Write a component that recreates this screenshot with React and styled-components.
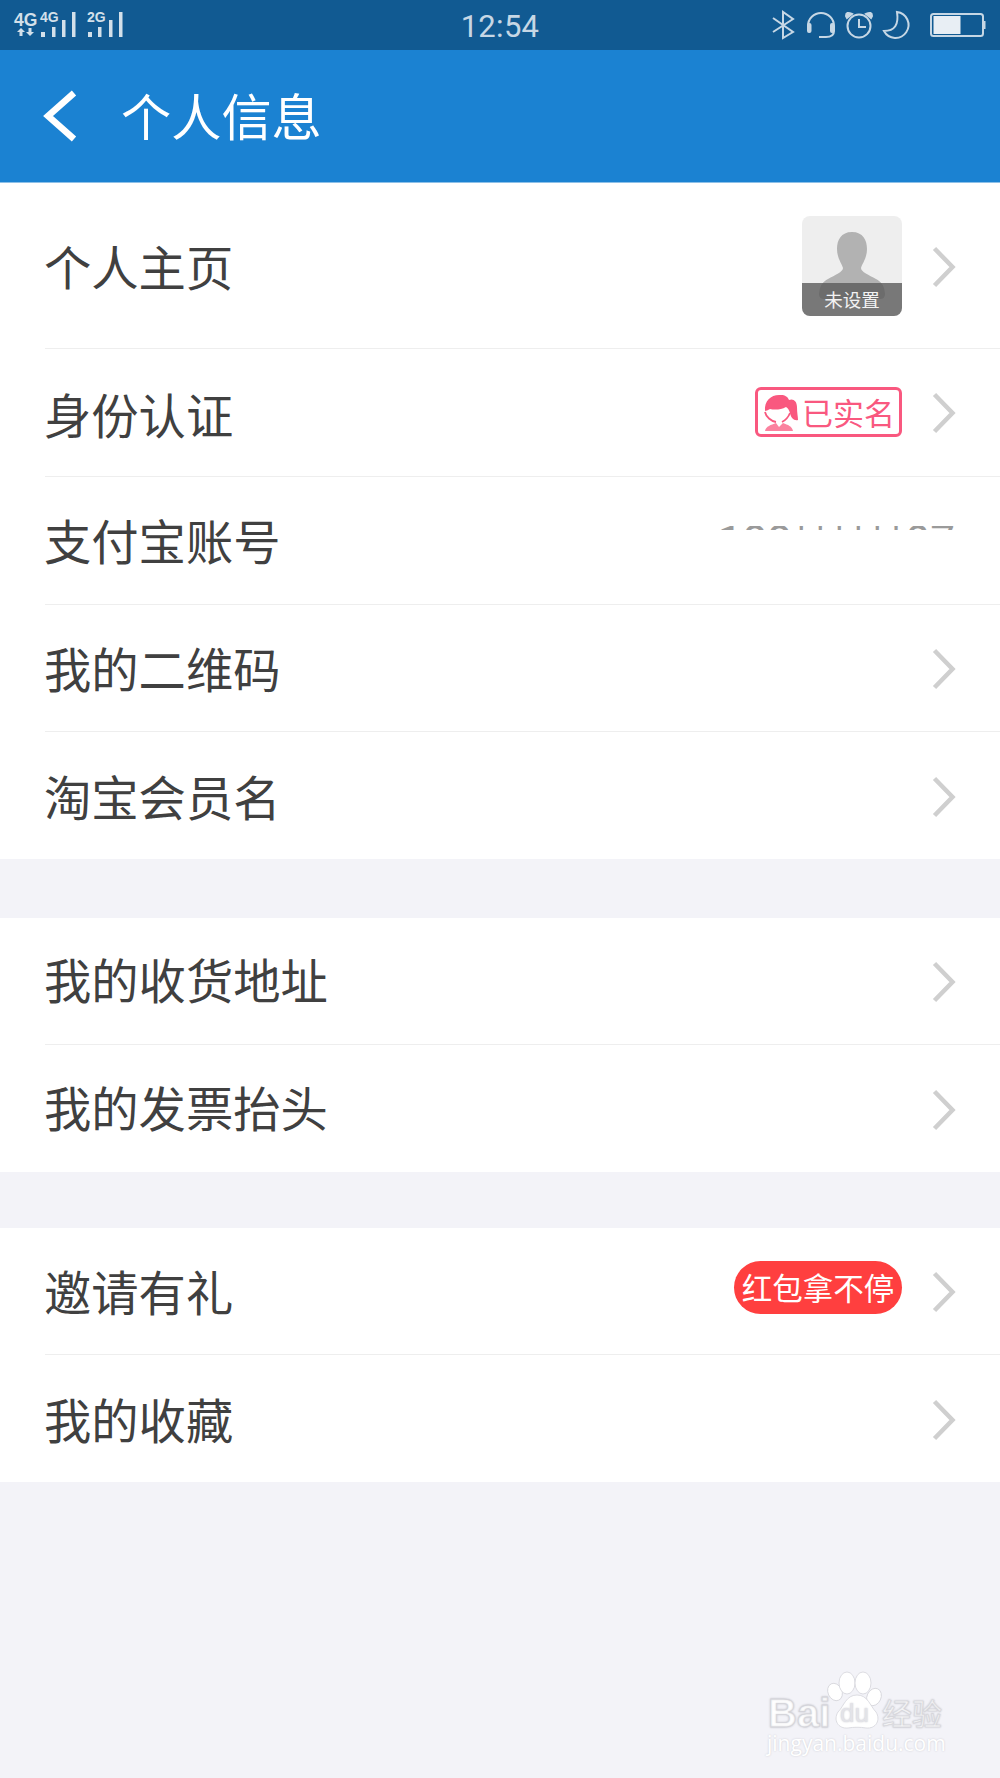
import React from "react";
import styled, { createGlobalStyle } from "styled-components";

const Global = createGlobalStyle`
  html, body { margin: 0; padding: 0; background: #f3f3f8; }
  body { font-family: "Noto Sans CJK SC", "Liberation Sans", sans-serif; }
`;

const Page = styled.div`
  position: relative;
  width: 1000px;
  height: 1778px;
  overflow: hidden;
  background: #f3f3f8;
`;

const StatusBar = styled.div`
  height: 50px;
  background: #115a92;
  display: flex;
  align-items: center;
  justify-content: space-between;
  color: #c6d7e5;
`;

const StatusSide = styled.div`
  width: 300px;
  height: 50px;
  display: flex;
  justify-content: ${(p) => (p.$end ? "flex-end" : "flex-start")};
`;

const Clock = styled.div`
  font-family: Roboto, "Liberation Sans", sans-serif;
  font-size: 31px;
  line-height: 50px;
  letter-spacing: 0.3px;
  padding-top: 3px;
`;

const Header = styled.header`
  height: 133px;
  box-sizing: border-box;
  padding-left: 39px;
  background: #1b82d2;
  border-bottom: 1px solid #8dc0e8;
  display: flex;
  align-items: center;
  gap: 42px;
`;

const Title = styled.h1`
  margin: 0 0 4px;
  font-size: 50.2px;
  font-weight: 400;
  line-height: 60px;
  color: #fff;
`;

const Group = styled.section`
  background: #fff;
  margin-bottom: ${(p) => p.$gap}px;
`;

const Row = styled.div`
  height: ${(p) => p.$h || 126.75}px;
  margin-left: 45px;
  padding-right: 44px;
  display: flex;
  align-items: center;
  justify-content: space-between;
  border-bottom: 1px solid #eeeeee;
  &:last-child { border-bottom: 0; }
`;

const Label = styled.span`
  font-size: 47.3px;
  font-weight: 400;
  line-height: 60px;
  color: #404040;
  margin-left: -1px;
  padding-top: ${(p) => p.$down || 0}px;
  padding-bottom: ${(p) => p.$up || 0}px;
`;

const Right = styled.div`
  display: flex;
  align-items: center;
  gap: 30px;
`;

const Chevron = styled.svg`
  width: 24px;
  height: 42px;
  display: block;
  margin-top: 2px;
  fill: none;
  stroke: #cfcfcf;
  stroke-width: 4.5;
`;

const Avatar = styled.div`
  position: relative;
  width: 100px;
  height: 100px;
  border-radius: 8px;
  overflow: hidden;
  background: #eeeeee;
`;

const AvatarBand = styled.div`
  position: absolute;
  left: 0;
  right: 0;
  bottom: 0;
  height: 33px;
  background: rgba(90, 90, 90, 0.8);
  color: #f2f2f2;
  font-size: 18.5px;
  line-height: 33px;
  text-align: center;
`;

const RealName = styled.div`
  width: 147px;
  height: 50px;
  box-sizing: border-box;
  border: 3px solid #f9587f;
  border-radius: 6px;
  padding-left: 5px;
  display: flex;
  align-items: center;
  gap: 3px;
  color: #f9587f;
  font-size: 31px;
  font-weight: 400;
  line-height: 44px;
`;

const RedPill = styled.div`
  width: 168px;
  height: 53px;
  margin-bottom: 6px;
  border-radius: 27px;
  background: #ff3f3f;
  color: #fff;
  font-size: 30.5px;
  line-height: 52px;
  text-align: center;
`;

const ClippedValue = styled.div`
  align-self: flex-start;
  margin-top: 49px;
  margin-right: 1px;
  height: 4px;
  overflow: hidden;
  font-family: Roboto, "Liberation Sans", sans-serif;
  font-size: 44px;
  line-height: 60px;
  color: #9a9a9a;
  white-space: nowrap;
  & > span { display: block; margin-top: -14px; }
`;

const Watermark = styled.div`
  position: absolute;
  left: 766px;
  top: 1668px;
  width: 190px;
  height: 96px;
  color: #fff;
  text-shadow: 0 0 2px #c9c9cf;
`;

const WmLogo = styled.svg`
  position: absolute;
  left: 0;
  top: 0;
  width: 190px;
  height: 72px;
`;

const WmUrl = styled.div`
  position: absolute;
  left: 1px;
  top: 65px;
  font-family: "Open Sans", "Liberation Sans", sans-serif;
  font-size: 21px;
  line-height: 20px;
  white-space: nowrap;
`;

const Arrow = () => (
  <Chevron viewBox="0 0 24 42">
    <path d="M2.500 2.500 L20.500 21 L2.500 39.500" />
  </Chevron>
);

const rows1 = ["身份认证", "支付宝账号", "我的二维码", "淘宝会员名"];

const SignalIcon = () => (
  <svg width="130" height="50" viewBox="0 0 130 50" fill="#d3e0ea" style={{ display: "block" }}>
    <text x="14" y="26" fontFamily="Liberation Sans, sans-serif" fontWeight="700" fontSize="17.5">4G</text>
    <text x="40" y="22" fontFamily="Liberation Sans, sans-serif" fontWeight="700" fontSize="14">4G</text>
    <text x="87" y="22" fontFamily="Liberation Sans, sans-serif" fontWeight="700" fontSize="14">2G</text>
    <path d="M21 28l-4 4h2.500v4h3v-4h2.500zM30 36l4-4h-2.500v-4h-3v4h-2.500z" />
    <rect x="41" y="32" width="4" height="5" />
    <rect x="52" y="27" width="3.500" height="10" />
    <rect x="62" y="20" width="3.500" height="17" />
    <rect x="72" y="12" width="3.500" height="25" />
    <rect x="88" y="32" width="4" height="5" />
    <rect x="98" y="27" width="3.500" height="10" />
    <rect x="109" y="20" width="3.500" height="17" />
    <rect x="119" y="12" width="3.500" height="25" />
  </svg>
);

const StatusIcons = () => (
  <svg width="300" height="50" viewBox="700 0 300 50" fill="none" stroke="#c6d7e5" strokeWidth="2" style={{ display: "block" }}>
    <path d="M773 18 L793 32 L783 38 V12 L793 19 L773 32" />
    <path d="M808 31 V26 A13 13 0 0 1 834 26 V31" />
    <rect x="808" y="24" width="2.500" height="8" rx="1" fill="#c6d7e5" />
    <rect x="831" y="24" width="2.500" height="8" rx="1" fill="#c6d7e5" />
    <path d="M834 31 Q834 37 826 37 H819" />
    <circle cx="859" cy="26" r="11.500" />
    <path d="M859 19 V27 H866" />
    <path d="M847 18 L852 14 Q846 11 846 16z M871 18 L866 14 Q872 11 872 16z" fill="#c6d7e5" />
    <path d="M897 12 A13 13 0 1 1 884 31 Q900 31 897 12 Z" />
    <rect x="931" y="14" width="52" height="22" rx="2.500" />
    <rect x="933.500" y="16" width="27" height="18" fill="#e8eef4" stroke="none" />
    <rect x="982.500" y="21" width="3" height="8" fill="#c6d7e5" stroke="none" />
  </svg>
);

const Silhouette = () => (
  <svg width="100" height="100" viewBox="0 0 100 100" style={{ display: "block" }}>
    <path fill="#b2b2b2" d="M50 16 C61 16 65 24 65 33 C65 42 60 48 59 52 C59 56 67 59 74 63 C79 66 82 68 83 78 Q83 83 78 83 H22 Q17 83 17 78 C18 68 21 66 26 63 C33 59 41 56 41 52 C40 48 35 42 35 33 C35 24 39 16 50 16 Z" />
  </svg>
);

const GirlIcon = () => (
  <svg width="36" height="40" viewBox="0 0 36 40" style={{ display: "block", flex: "none" }}>
    <path fill="#f9587f" d="M2 19 C1 8 9 2 18 3 C22 3 25 5 26 8 C30 6 34 9 34 15 C34 21 35 25 35 28 C31 29 28 26 27 21 C26 18 25 16 23 15 C18 18 11 18 7 17 C5 18 3 19 2 19 Z" />
    <path fill="none" stroke="#f9587f" strokeWidth="1.800" d="M2 20 C3 25 8 29 13 30 M27 21 C25 26 21 29 19 30" />
    <path fill="#f9587f" opacity="0.75" d="M2 39 C3 34 8 33 13 31 L16 35 L20 31 C25 33 29 34 30 39 Z" />
  </svg>
);

const Logo = () => (
  <WmLogo viewBox="0 0 190 72">
    <g fill="#fff" stroke="#d4d4da" strokeWidth="0.800">
      <ellipse cx="69" cy="24" rx="7" ry="9" transform="rotate(-25 69 24)" />
      <ellipse cx="81" cy="15" rx="8" ry="11" />
      <ellipse cx="97" cy="15" rx="8" ry="11" />
      <ellipse cx="108" cy="29" rx="7" ry="9" transform="rotate(25 108 29)" />
      <path d="M91 27 C102 27 104 38 110 44 C115 52 110 61 100 60 C94 59 88 59 82 60 C72 61 67 52 72 44 C78 38 80 27 91 27Z" />
    </g>
    <text x="2" y="59" fill="#fff" stroke="#d4d4da" strokeWidth="0.800" fontFamily="Liberation Sans, sans-serif" fontWeight="700" fontSize="40">Bai</text>
    <text x="74" y="54" fill="#e3e3e8" fontFamily="Liberation Sans, sans-serif" fontSize="26">du</text>
    <text x="116" y="57" fill="#fff" stroke="#d4d4da" strokeWidth="0.600" fontSize="30">经验</text>
  </WmLogo>
);

export default function App() {
  return (
    <Page>
      <Global />
      <StatusBar>
        <StatusSide><SignalIcon /></StatusSide>
        <Clock>12:54</Clock>
        <StatusSide $end><StatusIcons /></StatusSide>
      </StatusBar>
      <Header>
        <svg width="40" height="56" viewBox="0 0 40 56" fill="none" stroke="#fff" strokeWidth="6.5" style={{ display: "block" }}>
          <path d="M35 5 L9 28 L35 51" />
        </svg>
        <Title>个人信息</Title>
      </Header>
      <Group $gap={58.5}>
        <Row $h={165}>
          <Label>个人主页</Label>
          <Right>
            <Avatar>
              <Silhouette />
              <AvatarBand>未设置</AvatarBand>
            </Avatar>
            <Arrow />
          </Right>
        </Row>
        {rows1.map((t, i) => (
          <Row key={t}>
            <Label $down={i === 0 ? 3 : 0}>{t}</Label>
            {i === 0 && (
              <Right>
                <RealName><GirlIcon />已实名</RealName>
                <Arrow />
              </Right>
            )}
            {i === 1 && <ClippedValue><span>188******07</span></ClippedValue>}
            {i > 1 && <Arrow />}
          </Row>
        ))}
      </Group>
      <Group $gap={55.5}>
        <Row><Label $up={3}>我的收货地址</Label><Arrow /></Row>
        <Row><Label $up={3}>我的发票抬头</Label><Arrow /></Row>
      </Group>
      <Group $gap={0}>
        <Row>
          <Label>邀请有礼</Label>
          <Right><RedPill>红包拿不停</RedPill><Arrow /></Right>
        </Row>
        <Row><Label>我的收藏</Label><Arrow /></Row>
      </Group>
      <Watermark>
        <Logo />
        <WmUrl>jingyan.baidu.com</WmUrl>
      </Watermark>
    </Page>
  );
}
